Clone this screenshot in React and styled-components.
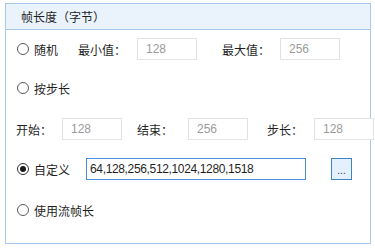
import React from 'react';
import styled, { createGlobalStyle } from 'styled-components';

const GlobalStyle = createGlobalStyle`
  body {
    margin: 0;
    background: #fff;
    font-family: "Liberation Sans", "Noto Sans CJK SC", sans-serif;
    font-size: 12px;
    color: #1f1f1f;
  }
`;

const GroupBox = styled.div`
  margin: 3px 0 0 5px;
  width: 364px;
  height: 239px;
  border: 1px solid #a9c9ec;
  box-sizing: content-box;
  display: flex;
  flex-direction: column;
`;

const Header = styled.div`
  height: 25px;
  background: #eaf3fc;
  border-bottom: 1px solid #a9c9ec;
  display: flex;
  align-items: center;
  padding-left: 15px;
`;

const Body = styled.div`
  padding: 8px 0 0 10px;
  display: flex;
  flex-direction: column;
`;

const Row = styled.div`
  display: flex;
  align-items: center;
  height: 22px;
  margin-top: ${({ $top }) => $top || 0}px;
  white-space: nowrap;
`;

const RadioLabel = styled.label`
  display: flex;
  align-items: center;
  margin-left: 1px;
  gap: 5px;
`;

const Circle = styled.span`
  width: 12px;
  height: 12px;
  box-sizing: border-box;
  border-radius: 50%;
  border: 1px solid ${({ $on }) => ($on ? '#333' : '#5a5a5a')};
  display: flex;
  align-items: center;
  justify-content: center;

  &::after {
    content: '';
    width: 6px;
    height: 6px;
    border-radius: 50%;
    background: #1a1a1a;
    display: ${({ $on }) => ($on ? 'block' : 'none')};
  }
`;

const Label = styled.span`
  display: inline-block;
  width: ${({ $w }) => $w}px;
  margin-left: ${({ $ml }) => $ml || 0}px;
  flex-shrink: 0;
`;

const Field = styled.div`
  width: ${({ $w }) => $w}px;
  height: 22px;
  box-sizing: border-box;
  border: 1px solid ${({ $active }) => ($active ? '#4a8fd6' : '#e2e2e2')};
  margin-left: ${({ $ml }) => $ml || 0}px;
  padding-left: ${({ $active }) => ($active ? 3 : 8)}px;
  letter-spacing: ${({ $active }) => ($active ? '-0.35px' : 'normal')};
  display: flex;
  align-items: center;
  color: ${({ $active }) => ($active ? '#1f1f1f' : '#9b9b9b')};
  background: #fff;
  flex-shrink: 0;
`;

const DotsButton = styled.button`
  width: 21px;
  height: 22px;
  margin-left: 25px;
  padding: 0;
  border: 1px solid #3d84c6;
  background: #e4f0fb;
  font-family: "Liberation Sans", sans-serif;
  font-size: 10px;
  color: #333;
  line-height: 1;
  padding-top: 4px;
`;

const Radio = ({ on, children }) => (
  <RadioLabel>
    <Circle $on={on} />
    <span>{children}</span>
  </RadioLabel>
);

export default function App() {
  return (
    <>
      <GlobalStyle />
      <GroupBox>
        <Header>帧长度（字节）</Header>
        <Body>
          <Row>
            <Radio>随机</Radio>
            <Label $w={59} $ml={20}>最小值：</Label>
            <Field $w={60}>128</Field>
            <Label $w={58} $ml={25}>最大值：</Label>
            <Field $w={60}>256</Field>
          </Row>
          <Row $top={17}>
            <Radio>按步长</Radio>
          </Row>
          <Row $top={19}>
            <Label $w={46}>开始：</Label>
            <Field $w={60}>128</Field>
            <Label $w={51} $ml={15}>结束：</Label>
            <Field $w={60}>256</Field>
            <Label $w={47} $ml={19}>步长：</Label>
            <Field $w={60}>128</Field>
          </Row>
          <Row $top={18}>
            <Radio on>自定义</Radio>
            <Field $w={220} $ml={16} $active>64,128,256,512,1024,1280,1518</Field>
            <DotsButton>...</DotsButton>
          </Row>
          <Row $top={19}>
            <Radio>使用流帧长</Radio>
          </Row>
        </Body>
      </GroupBox>
    </>
  );
}
